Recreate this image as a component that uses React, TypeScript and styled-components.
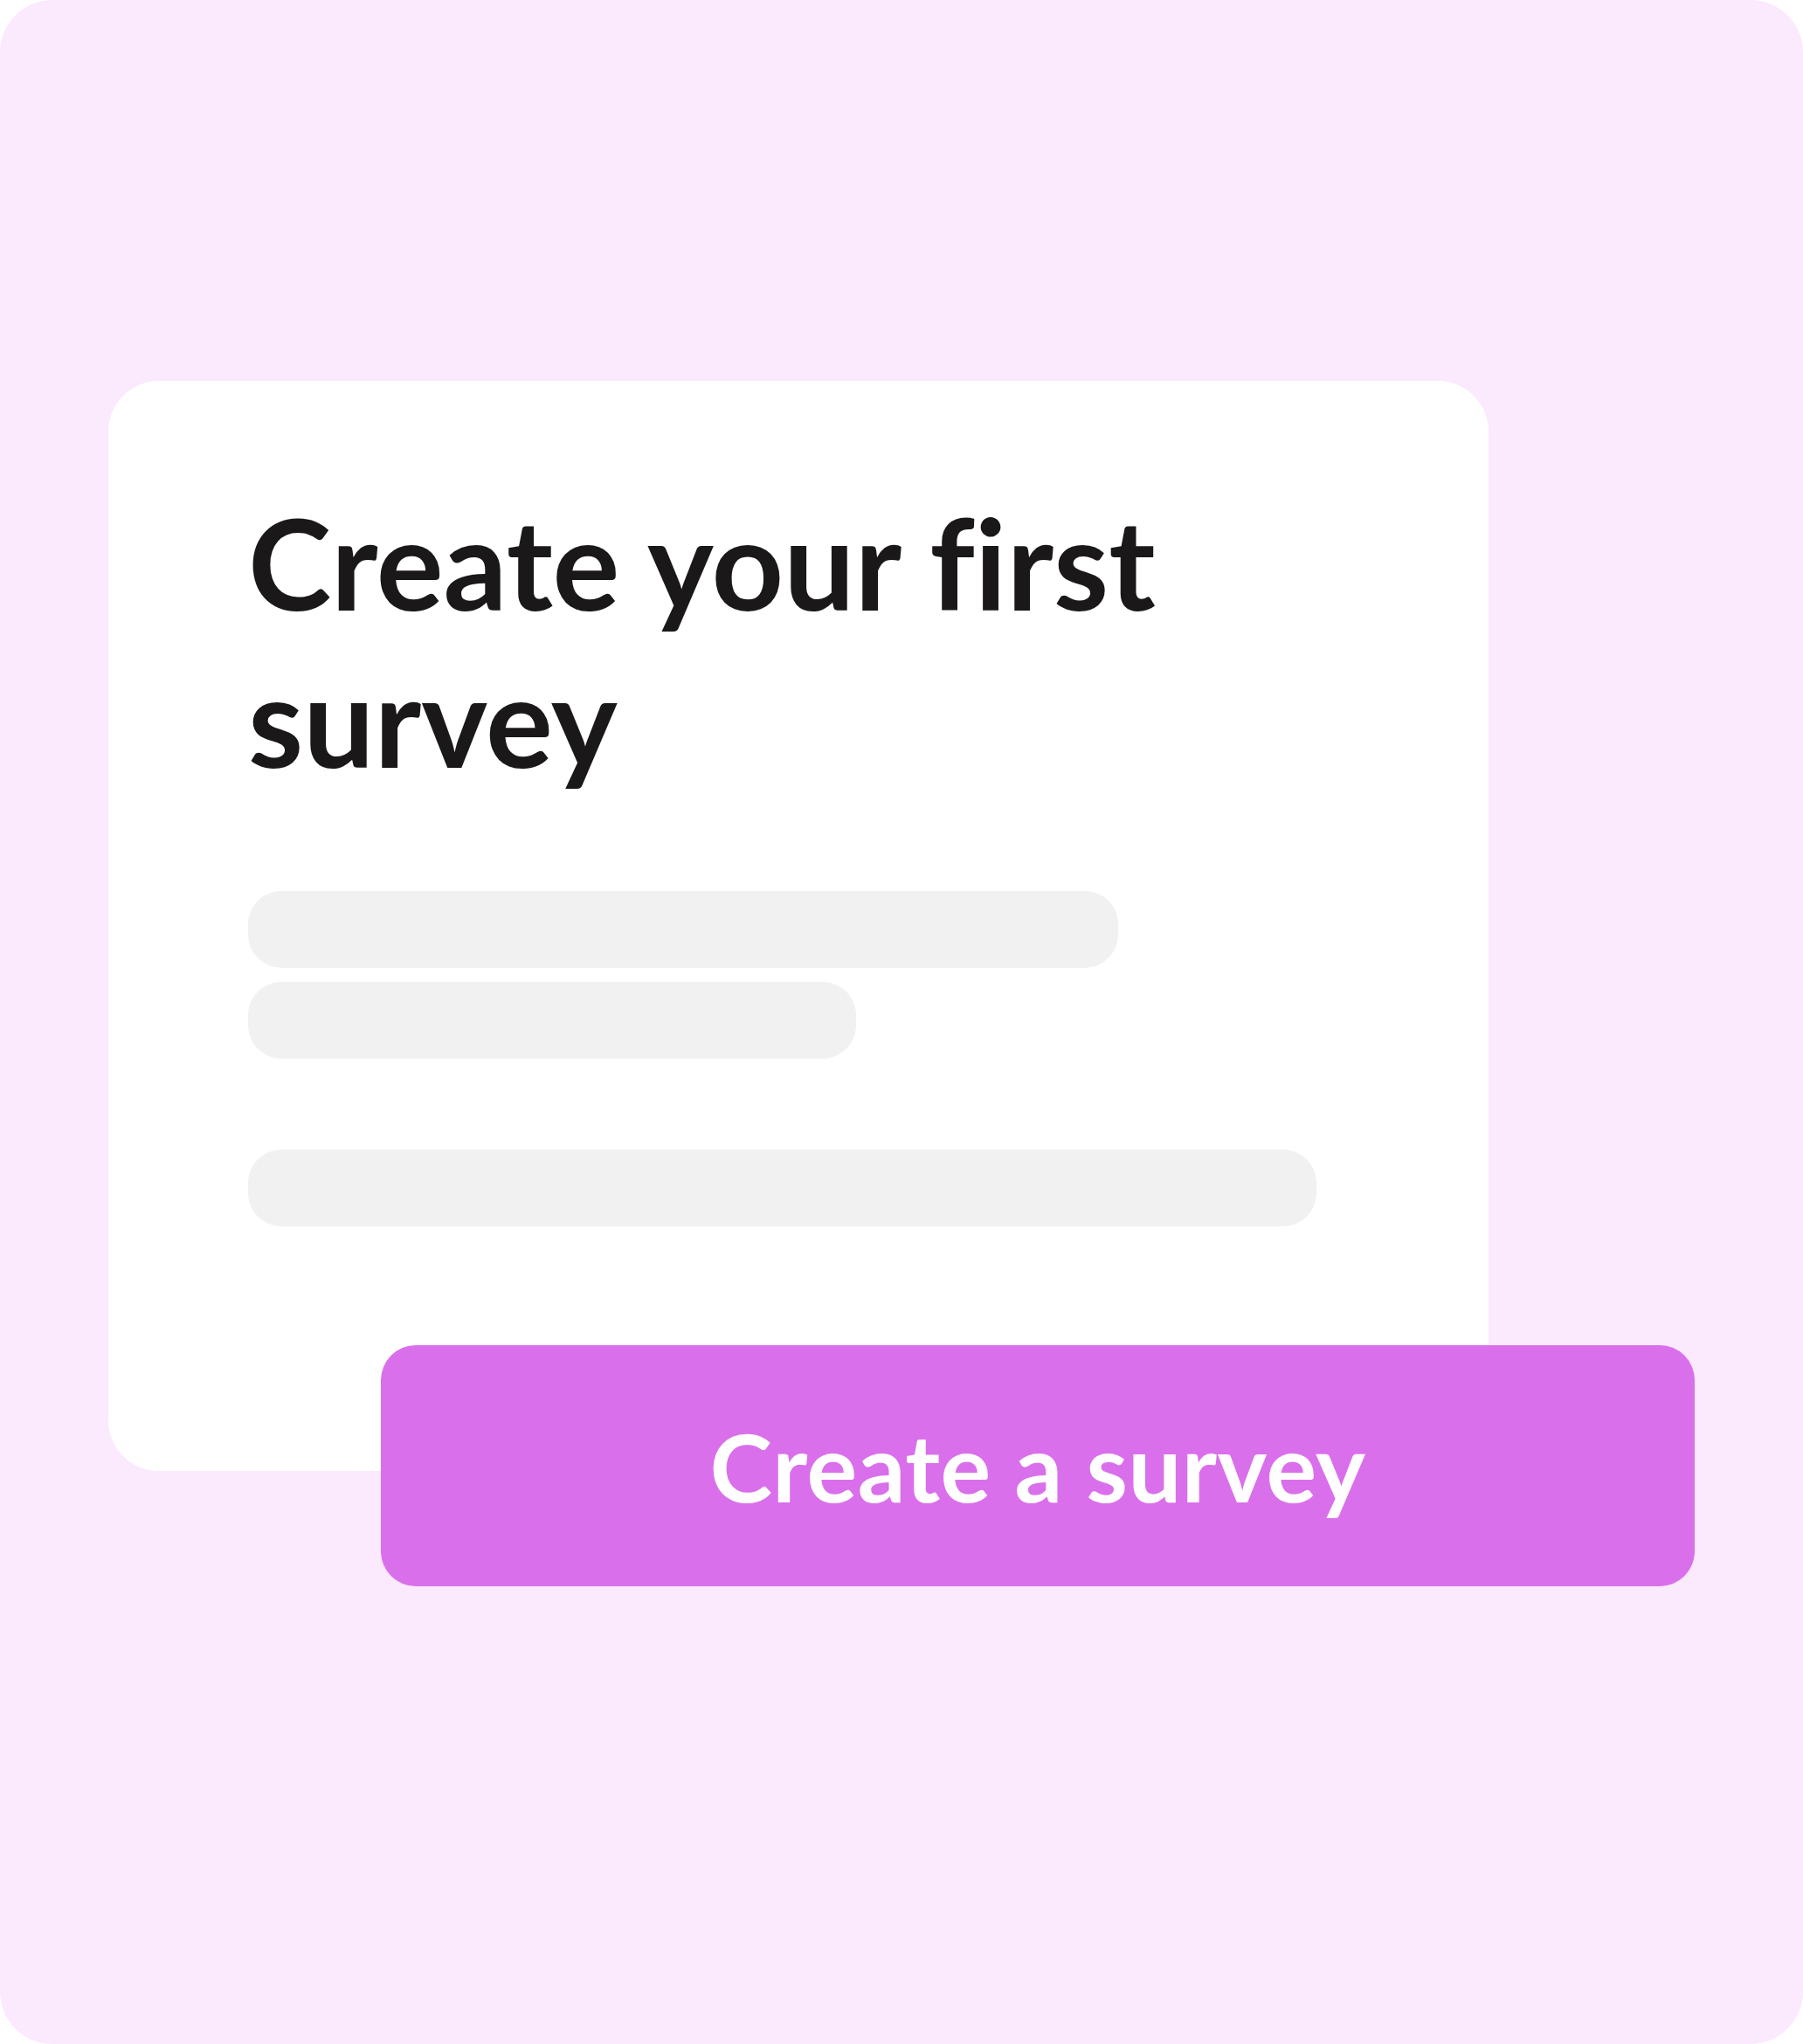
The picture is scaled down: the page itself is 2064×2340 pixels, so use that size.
import React from "react";
import styled, { createGlobalStyle } from "styled-components";

const Global = createGlobalStyle`
  html, body { margin: 0; padding: 0; background: #ffffff; }
  * { box-sizing: border-box; }
`;

const Panel = styled.div`
  width: 2064px;
  height: 2340px;
  background: #fbe9fd;
  border-radius: 60px;
  padding: 436px 0 0 124px;
  display: flex;
  flex-direction: column;
  align-items: flex-start;
  font-family: Lato, "Open Sans", sans-serif;
  font-variant-ligatures: none;
`;

const Card = styled.div`
  width: 1580px;
  height: 1248px;
  background: #ffffff;
  border-radius: 58px;
  padding: 118px 0 0 160px;
  display: flex;
  flex-direction: column;
`;

const Title = styled.h1`
  margin: 0;
  width: 1100px;
  font-size: 144px;
  line-height: 180px;
  font-weight: 700;
  color: #1a1818;
  letter-spacing: 0;
  font-variant-ligatures: none;
`;

const Bars = styled.div<{ $gap: number; $top: number }>`
  display: flex;
  flex-direction: column;
  gap: ${(p) => p.$gap}px;
  margin-top: ${(p) => p.$top}px;
`;

const Bar = styled.div<{ $w: number }>`
  width: ${(p) => p.$w}px;
  height: 88px;
  border-radius: 38px;
  background: #f1f1f1;
`;

const Button = styled.button`
  margin: -144px 0 0 312px;
  width: 1504px;
  height: 276px;
  border: none;
  border-radius: 40px;
  background: #da6feb;
  color: #ffffff;
  font-family: Lato, "Open Sans", sans-serif;
  font-weight: 700;
  font-size: 108px;
  letter-spacing: 0.5px;
  line-height: 1;
  display: flex;
  align-items: center;
  justify-content: center;
  padding: 0;
  cursor: pointer;
`;

export default function App() {
  return (
    <>
      <Global />
      <Panel>
        <Card>
          <Title>Create your first survey</Title>
          <Bars $gap={16} $top={106}>
            <Bar $w={996} />
            <Bar $w={696} />
          </Bars>
          <Bars $gap={0} $top={104}>
            <Bar $w={1223} />
          </Bars>
        </Card>
        <Button>Create a survey</Button>
      </Panel>
    </>
  );
}
